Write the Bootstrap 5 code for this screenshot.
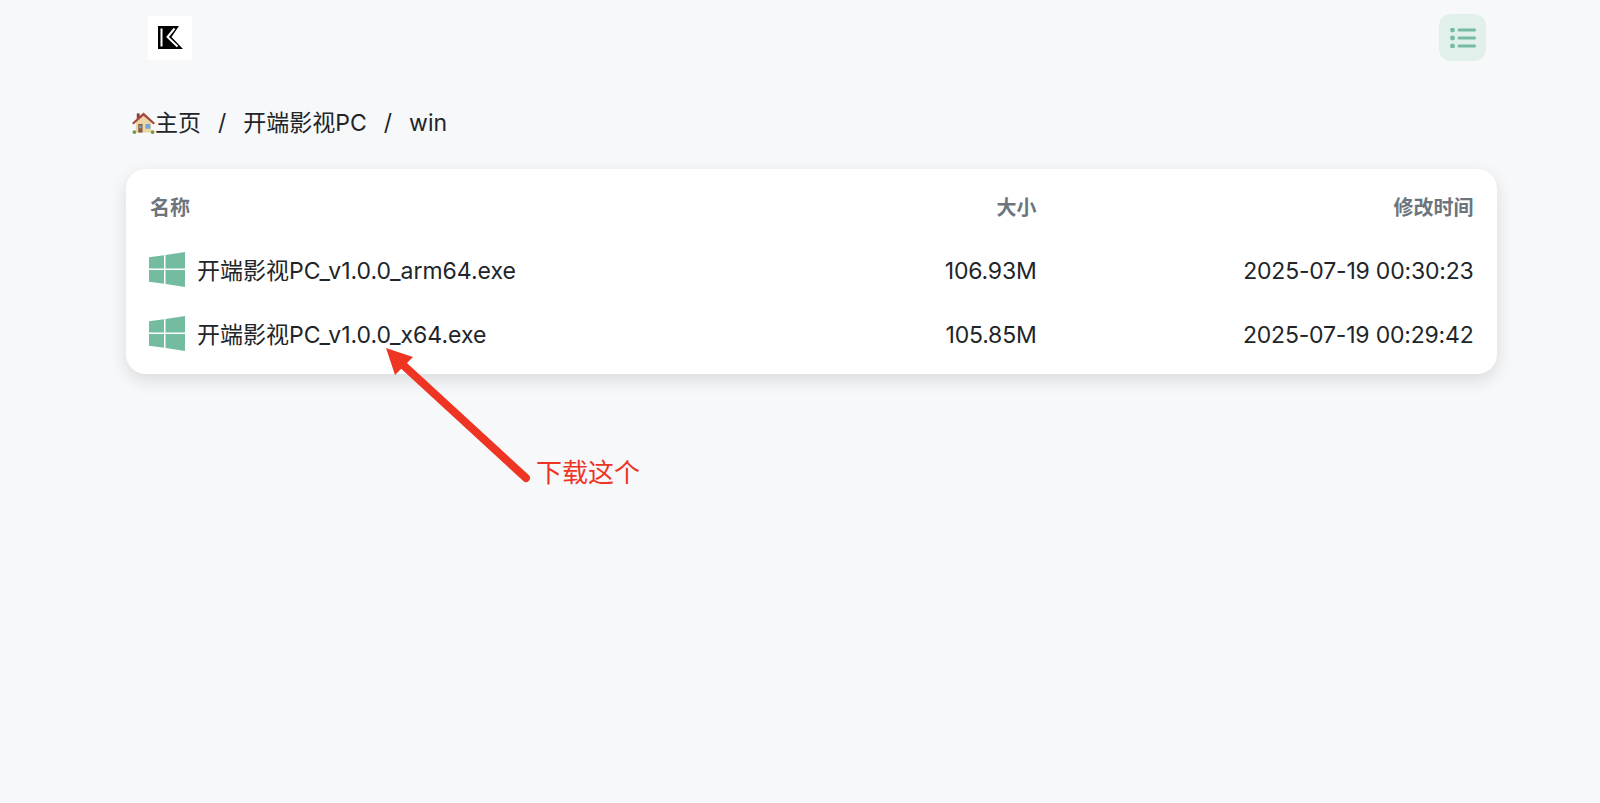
<!DOCTYPE html>
<html>
  <head>
    <meta charset="UTF-8" />
    <meta name="viewport" content="width=device-width, initial-scale=1.0" />
    <title>开端影视PC</title>
    <link href="https://cdn.jsdelivr.net/npm/bootstrap@5.3.0/dist/css/bootstrap.min.css" rel="stylesheet" />
    <style>
      body {
        background: #f7f8fa;
        color: #212529;
        font-family: Inter, "Noto Sans CJK SC", sans-serif;
        min-height: 803px;
        position: relative;
      }
      .page-wrap {
        width: 1371px;
        margin-left: 126px;
      }
      .top-bar {
        height: 75px;
        padding: 0 11px 0 22px;
      }
      .logo-box {
        width: 44px;
        height: 44px;
        background: #fff;
      }
      .menu-btn {
        width: 47px;
        height: 47px;
        border-radius: 12px;
        background: #e2f0eb;
        border: 0;
        padding: 0;
      }
      .crumbs {
        height: 94px;
        font-size: 23px;
        padding: 2px 0 0 6px;
      }
      .crumbs .breadcrumb {
        --bs-breadcrumb-margin-bottom: 0;
        --bs-breadcrumb-item-padding-x: 17px;
        --bs-breadcrumb-divider-color: #212529;
      }
      .crumbs a {
        color: #212529;
        text-decoration: none;
      }
      .crumbs .breadcrumb-item.active {
        color: #212529;
      }
      .file-card {
        border-radius: 20px;
        border: 0;
        padding: 8px 0;
        box-shadow: 0 6px 18px rgba(0, 0, 0, 0.12);
      }
      .file-table {
        margin: 0;
        font-size: 23px;
        --bs-table-bg: transparent;
      }
      .file-table th,
      .file-table td {
        border: 0;
        padding: 0 23.5px 0 24px;
        vertical-align: middle;
      }
      .file-table td {
        height: 64px;
        padding-top: 2px;
      }
      .file-table th {
        height: 61px;
        font-size: 20px;
        font-weight: 600;
        color: #6c757d;
      }
      .size-col {
        width: 300px;
      }
      .time-col {
        width: 437px;
      }
      .num-cell {
        letter-spacing: -0.2px;
      }
      .file-link {
        color: #212529;
        text-decoration: none;
        gap: 12px;
        margin-left: -1px;
      }
      .win-icon {
        width: 36px;
        height: 35px;
        flex: none;
        margin-top: -3px;
      }
      .arrow-mark {
        position: absolute;
        left: 0;
        top: 0;
        pointer-events: none;
      }
      .arrow-note {
        position: absolute;
        left: 536px;
        top: 455px;
        font-size: 26px;
        line-height: 36px;
        color: #ee3524;
      }
    </style>
  </head>
  <body>
    <div class="page-wrap">
      <div class="top-bar d-flex align-items-center justify-content-between">
        <a class="logo-box d-flex align-items-center justify-content-center" href="#">
          <svg width="25" height="23" viewBox="0 0 25 23">
            <path d="M0 0H21L13.500 11 25 23H0Z" fill="#000" />
            <path d="M3.500 2.500V20.500" stroke="#fff" stroke-width="2" fill="none" />
            <path d="M16.500 2.500 9.500 11 19.500 20.500" stroke="#fff" stroke-width="2" fill="none" />
          </svg>
        </a>
        <button class="menu-btn d-flex align-items-center justify-content-center" type="button">
          <svg width="26" height="20" viewBox="0 0 26 20" fill="#74bc9f">
            <circle cx="2.500" cy="2" r="2.400" />
            <circle cx="2.500" cy="10" r="2.400" />
            <circle cx="2.500" cy="18" r="2.400" />
            <rect x="7.500" y=".5" width="18.500" height="3" rx="1.500" />
            <rect x="7.500" y="8.500" width="18.500" height="3" rx="1.500" />
            <rect x="7.500" y="16.500" width="18.500" height="3" rx="1.500" />
          </svg>
        </button>
      </div>

      <nav class="d-flex align-items-center crumbs" style="--bs-breadcrumb-divider: '/'">
        <ol class="breadcrumb align-items-center">
          <li class="breadcrumb-item">
            <a class="d-flex align-items-center" href="#">
              <svg width="23" height="24" viewBox="0 0 24 24">
                <path d="M5 2h3v6H5z" fill="#8f3b33" />
                <path d="M4 11 12 4l8 7v11H4z" fill="#ecd6a6" />
                <path d="M12 1 0 12l1.500 1.500L12 4.500l10.500 9L24 12z" fill="#a5473d" />
                <path d="M6.500 13H11v9H6.500z" fill="#8a5a3c" />
                <path d="M7.500 14.500H10v3H7.500z" fill="#6fa8d6" />
                <path d="M14 13h5v5h-5z" fill="#6fa8d6" />
                <circle cx="2.500" cy="21.500" r="2" fill="#6c9a45" />
                <circle cx="21.500" cy="21.500" r="2" fill="#6c9a45" />
              </svg>主页
            </a>
          </li>
          <li class="breadcrumb-item"><a href="#">开端影视PC</a></li>
          <li class="breadcrumb-item active">win</li>
        </ol>
      </nav>

      <div class="card file-card">
        <table class="table file-table">
          <thead>
            <tr>
              <th>名称</th>
              <th class="text-end size-col">大小</th>
              <th class="text-end time-col">修改时间</th>
            </tr>
          </thead>
          <tbody>
            <tr>
              <td>
                <a class="file-link d-flex align-items-center" href="#">
                  <svg class="win-icon" viewBox="0 0 36 36" fill="#74bc9f" preserveAspectRatio="none">
                    <path d="M0 5.500 15 3.300V17H0zM16.500 3.100 36 0v17H16.500zM0 18.500h15v14.200L0 30.500zM16.500 18.500H36V36l-19.500-3z" />
                  </svg>
                  <span>开端影视PC_v1.0.0_arm64.exe</span>
                </a>
              </td>
              <td class="text-end num-cell">106.93M</td>
              <td class="text-end num-cell">2025-07-19 00:30:23</td>
            </tr>
            <tr>
              <td>
                <a class="file-link d-flex align-items-center" href="#">
                  <svg class="win-icon" viewBox="0 0 36 36" fill="#74bc9f" preserveAspectRatio="none">
                    <path d="M0 5.500 15 3.300V17H0zM16.500 3.100 36 0v17H16.500zM0 18.500h15v14.200L0 30.500zM16.500 18.500H36V36l-19.500-3z" />
                  </svg>
                  <span>开端影视PC_v1.0.0_x64.exe</span>
                </a>
              </td>
              <td class="text-end num-cell">105.85M</td>
              <td class="text-end num-cell">2025-07-19 00:29:42</td>
            </tr>
          </tbody>
        </table>
      </div>
    </div>

    <svg class="arrow-mark" width="1600" height="803" viewBox="0 0 1600 803">
      <path d="M526 478 402 364" stroke="#ee3524" stroke-width="8" stroke-linecap="round" fill="none" />
      <path d="M386 348 413 357 395 375z" fill="#ee3524" />
    </svg>
    <div class="arrow-note">下载这个</div>

    <script src="https://cdn.jsdelivr.net/npm/bootstrap@5.3.0/dist/js/bootstrap.bundle.min.js"></script>
  </body>
</html>
